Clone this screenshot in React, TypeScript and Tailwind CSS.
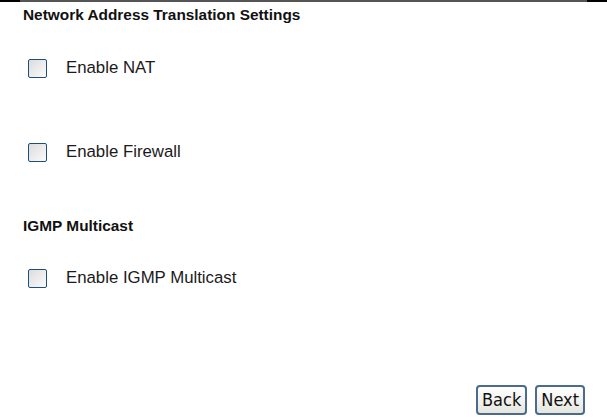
export default function App() {
  const row = (label: string, mt: string) => (
    <label className={`${mt} flex h-[20px] items-center pl-[28px]`}>
      <span className="block h-[19px] w-[19px] rounded-[2px] border border-[#1e4f7c] bg-gradient-to-br from-[#dcdcdc] to-[#fbfbfb]" />
      <span className="ml-[19px] text-[16.8px] text-[#1a1a1a]">{label}</span>
    </label>
  );

  const btn =
    "h-[30px] rounded-[4px] border-2 border-[#4a6a8e] bg-gradient-to-b from-white to-[#e6e6e0] px-[4px] font-['DejaVu_Sans_Condensed','DejaVu_Sans',Tahoma,sans-serif] text-[18px] leading-none text-[#111]";

  return (
    <div className="h-[418px] w-[607px] bg-white font-['Liberation_Sans',Arial,sans-serif]">
      <div className="flex h-[2px]">
        <div className="w-[20px] bg-black" />
        <div className="flex-1 bg-[#555]" />
        <div className="w-[20px] bg-black" />
      </div>

      <div className="mt-[4px] pl-[23px] text-[15.4px] font-bold leading-[18px] text-[#111]">
        Network Address Translation Settings
      </div>
      {row("Enable NAT", "mt-[34px]")}
      {row("Enable Firewall", "mt-[64px]")}

      <div className="mt-[55px] pl-[23px] text-[15.4px] font-bold leading-[18px] text-[#111]">
        IGMP Multicast
      </div>
      {row("Enable IGMP Multicast", "mt-[33px]")}

      <div className="mt-[97px] flex justify-end gap-[8px] pr-[22px]">
        <button className={btn}>Back</button>
        <button className={btn}>Next</button>
      </div>
    </div>
  );
}
